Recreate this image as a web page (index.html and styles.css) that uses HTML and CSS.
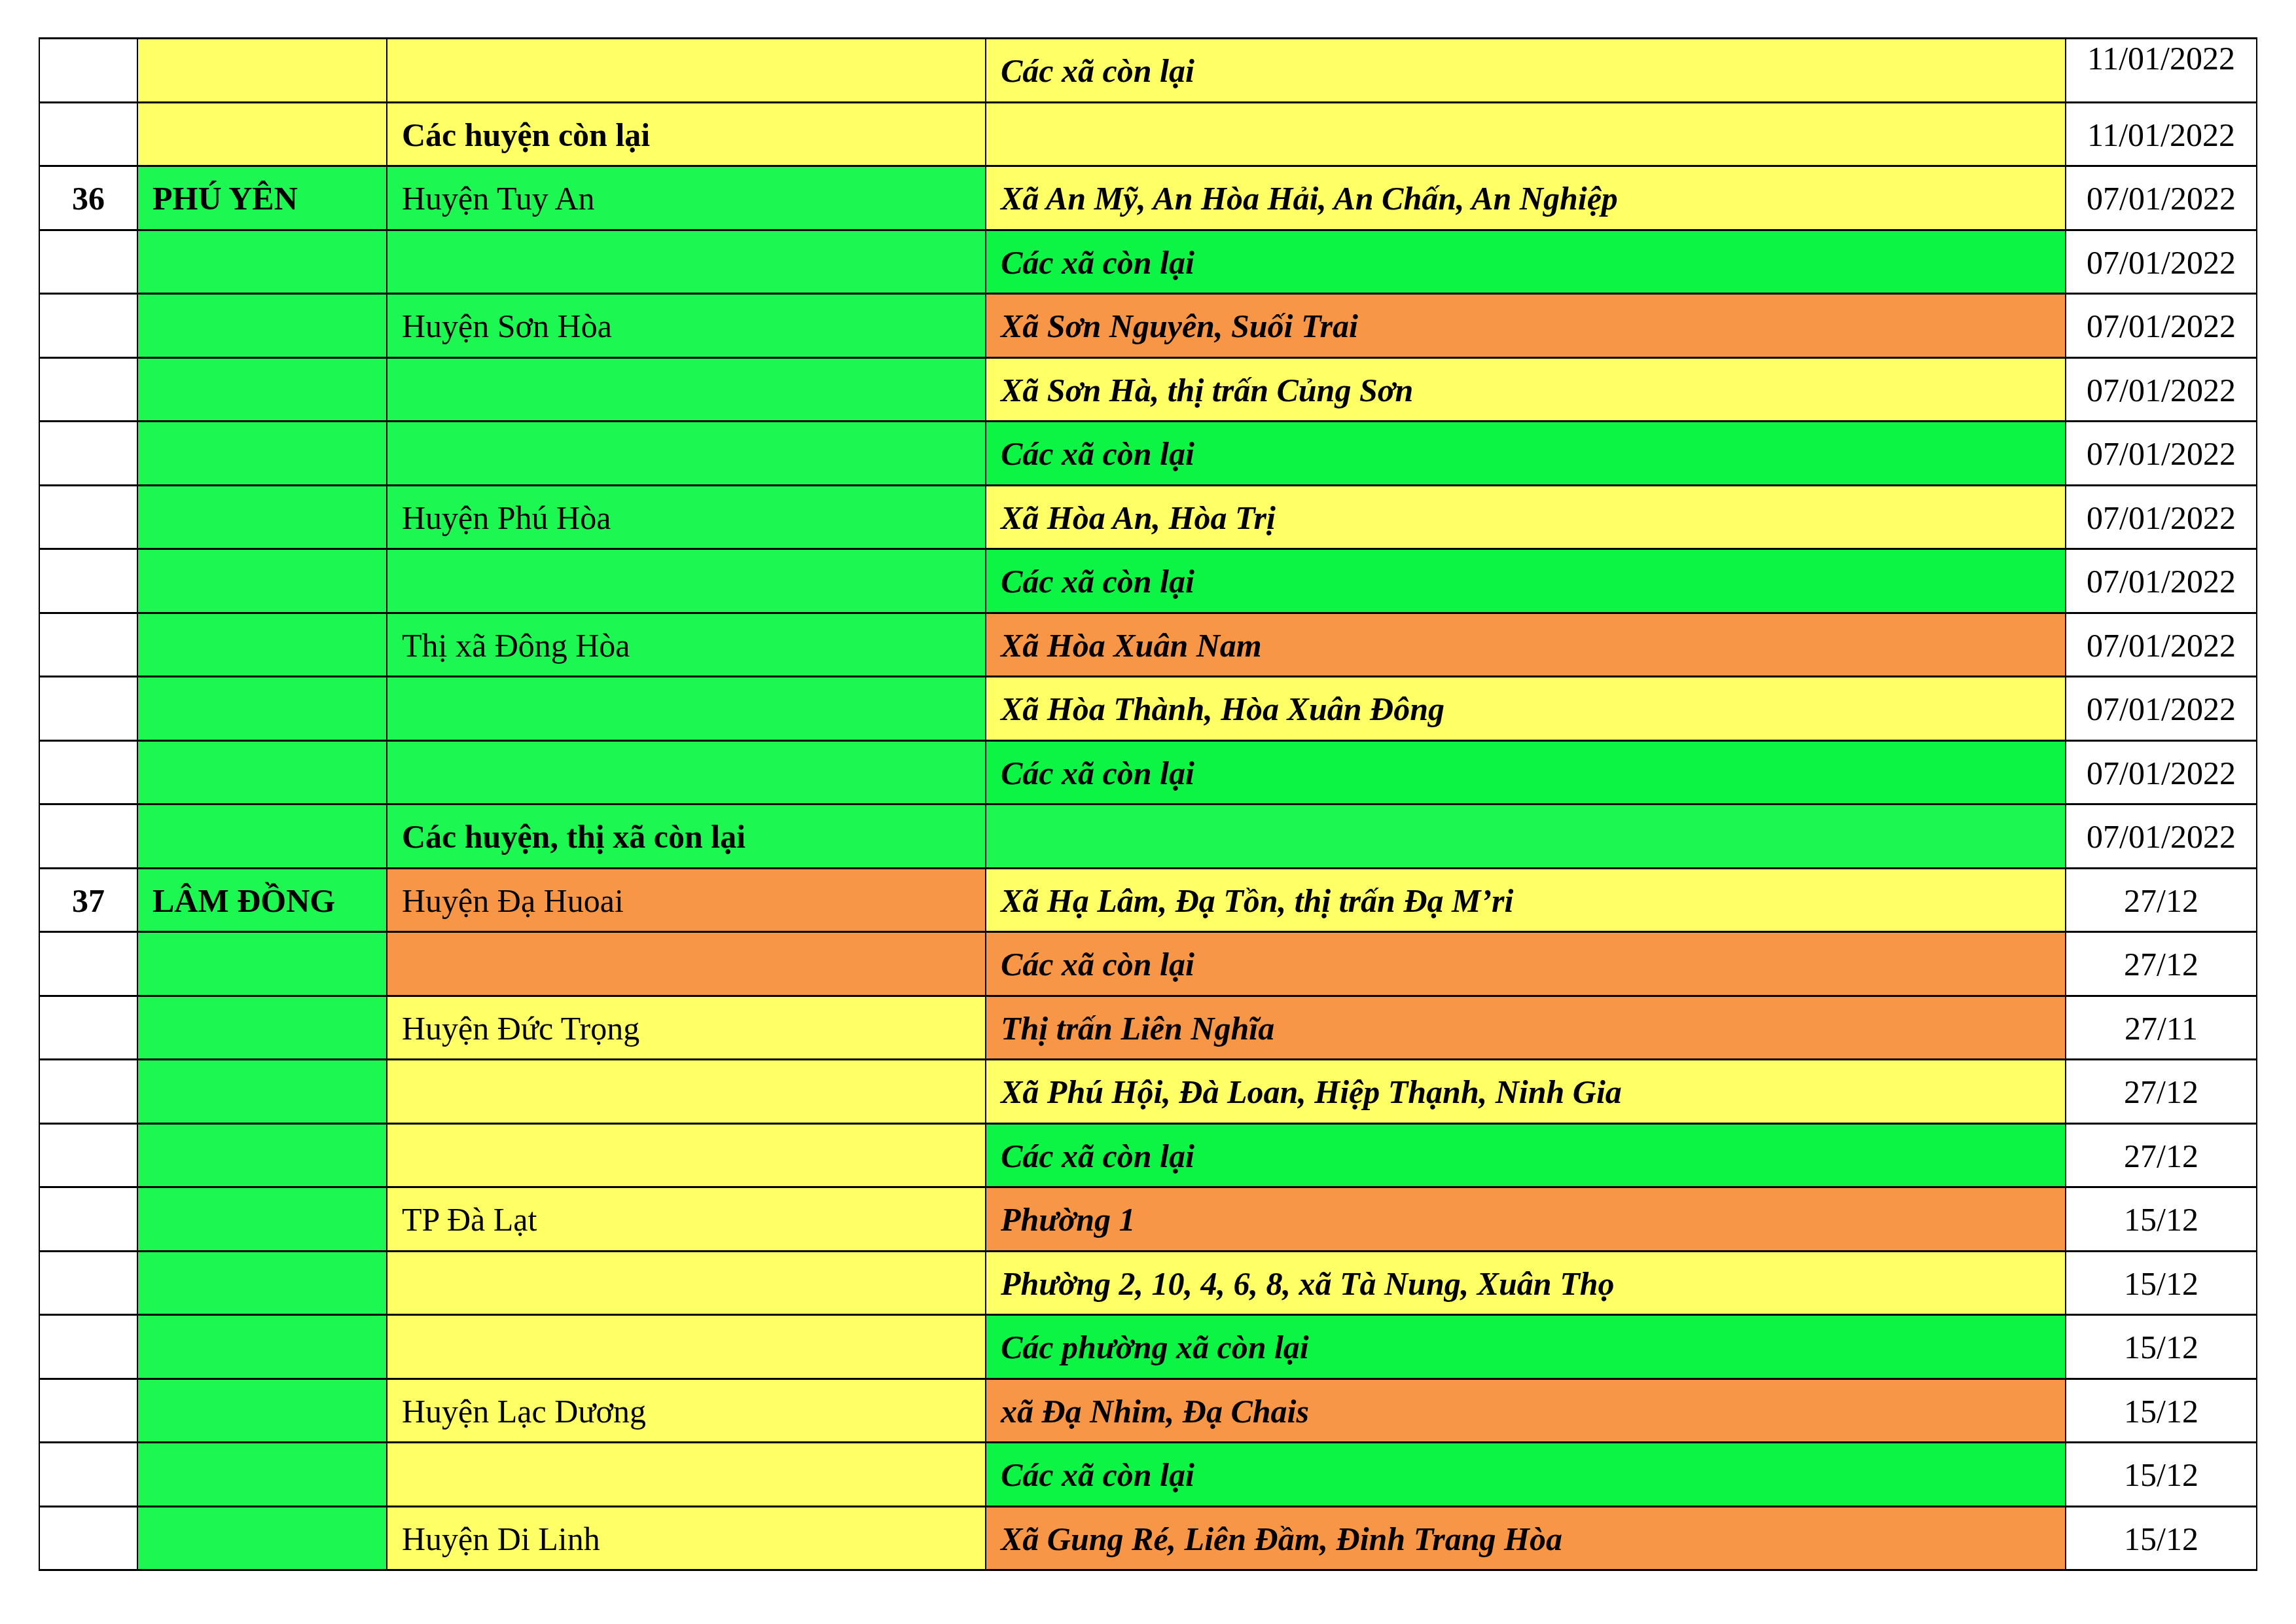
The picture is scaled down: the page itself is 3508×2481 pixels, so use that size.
FILE: index.html
```html
<!DOCTYPE html>
<html lang="vi">
<head>
<meta charset="utf-8">
<title>Bảng</title>
<link rel="stylesheet" href="styles.css">
</head>
<body>
<table class="grid">
<colgroup>
<col class="c-no"><col class="c-prov"><col class="c-dist"><col class="c-comm"><col class="c-date">
</colgroup>
<tbody>
<tr><td class="no"></td><td class="prov y"></td><td class="dist y"></td><td class="comm y">Các xã còn lại</td><td class="date top">11/01/2022</td></tr>
<tr><td class="no"></td><td class="prov y"></td><td class="dist y b">Các huyện còn lại</td><td class="comm y"></td><td class="date">11/01/2022</td></tr>
<tr><td class="no">36</td><td class="prov g">PHÚ YÊN</td><td class="dist g">Huyện Tuy An</td><td class="comm y">Xã An Mỹ, An Hòa Hải, An Chấn, An Nghiệp</td><td class="date">07/01/2022</td></tr>
<tr><td class="no"></td><td class="prov g"></td><td class="dist g"></td><td class="comm g2">Các xã còn lại</td><td class="date">07/01/2022</td></tr>
<tr><td class="no"></td><td class="prov g"></td><td class="dist g">Huyện Sơn Hòa</td><td class="comm o">Xã Sơn Nguyên, Suối Trai</td><td class="date">07/01/2022</td></tr>
<tr><td class="no"></td><td class="prov g"></td><td class="dist g"></td><td class="comm y">Xã Sơn Hà, thị trấn Củng Sơn</td><td class="date">07/01/2022</td></tr>
<tr><td class="no"></td><td class="prov g"></td><td class="dist g"></td><td class="comm g2">Các xã còn lại</td><td class="date">07/01/2022</td></tr>
<tr><td class="no"></td><td class="prov g"></td><td class="dist g">Huyện Phú Hòa</td><td class="comm y">Xã Hòa An, Hòa Trị</td><td class="date">07/01/2022</td></tr>
<tr><td class="no"></td><td class="prov g"></td><td class="dist g"></td><td class="comm g2">Các xã còn lại</td><td class="date">07/01/2022</td></tr>
<tr><td class="no"></td><td class="prov g"></td><td class="dist g">Thị xã Đông Hòa</td><td class="comm o">Xã Hòa Xuân Nam</td><td class="date">07/01/2022</td></tr>
<tr><td class="no"></td><td class="prov g"></td><td class="dist g"></td><td class="comm y">Xã Hòa Thành, Hòa Xuân Đông</td><td class="date">07/01/2022</td></tr>
<tr><td class="no"></td><td class="prov g"></td><td class="dist g"></td><td class="comm g2">Các xã còn lại</td><td class="date">07/01/2022</td></tr>
<tr><td class="no"></td><td class="prov g"></td><td class="dist g b">Các huyện, thị xã còn lại</td><td class="comm g"></td><td class="date">07/01/2022</td></tr>
<tr><td class="no">37</td><td class="prov g">LÂM ĐỒNG</td><td class="dist o">Huyện Đạ Huoai</td><td class="comm y">Xã Hạ Lâm, Đạ Tồn, thị trấn Đạ M’ri</td><td class="date">27/12</td></tr>
<tr><td class="no"></td><td class="prov g"></td><td class="dist o"></td><td class="comm o">Các xã còn lại</td><td class="date">27/12</td></tr>
<tr><td class="no"></td><td class="prov g"></td><td class="dist y">Huyện Đức Trọng</td><td class="comm o">Thị trấn Liên Nghĩa</td><td class="date">27/11</td></tr>
<tr><td class="no"></td><td class="prov g"></td><td class="dist y"></td><td class="comm y">Xã Phú Hội, Đà Loan, Hiệp Thạnh, Ninh Gia</td><td class="date">27/12</td></tr>
<tr><td class="no"></td><td class="prov g"></td><td class="dist y"></td><td class="comm g2">Các xã còn lại</td><td class="date">27/12</td></tr>
<tr><td class="no"></td><td class="prov g"></td><td class="dist y">TP Đà Lạt</td><td class="comm o">Phường 1</td><td class="date">15/12</td></tr>
<tr><td class="no"></td><td class="prov g"></td><td class="dist y"></td><td class="comm y">Phường 2, 10, 4, 6, 8, xã Tà Nung, Xuân Thọ</td><td class="date">15/12</td></tr>
<tr><td class="no"></td><td class="prov g"></td><td class="dist y"></td><td class="comm g2">Các phường xã còn lại</td><td class="date">15/12</td></tr>
<tr><td class="no"></td><td class="prov g"></td><td class="dist y">Huyện Lạc Dương</td><td class="comm o">xã Đạ Nhim, Đạ Chais</td><td class="date">15/12</td></tr>
<tr><td class="no"></td><td class="prov g"></td><td class="dist y"></td><td class="comm g2">Các xã còn lại</td><td class="date">15/12</td></tr>
<tr><td class="no"></td><td class="prov g"></td><td class="dist y">Huyện Di Linh</td><td class="comm o">Xã Gung Ré, Liên Đầm, Đinh Trang Hòa</td><td class="date">15/12</td></tr>
</tbody>
</table>
</body>
</html>
```

FILE: styles.css
```css
html, body {
  margin: 0;
  padding: 0;
  background: #ffffff;
}

body {
  font-family: "Liberation Serif", "Times New Roman", serif;
  font-size: 50px;
  color: #000000;
}

.grid {
  border-collapse: separate;
  border-spacing: 0;
  table-layout: fixed;
  width: 3390px;
  margin: 57px 0 0 59px;
  border-top: 3px solid #000;
  border-left: 2px solid #000;
}

.c-no { width: 150px; }
.c-prov { width: 381px; }
.c-dist { width: 915px; }
.c-comm { width: 1650px; }
.c-date { width: 292px; }

.grid td {
  height: 94.5px;
  box-sizing: border-box;
  padding: 23px 0 0 22px;
  line-height: 50px;
  vertical-align: top;
  white-space: nowrap;
  overflow: hidden;
  border-right: 2px solid #000;
  border-bottom: 3px solid #000;
  background: #ffffff;
}

.grid tr { height: 97.5px; }

.grid td.no {
  text-align: center;
  font-weight: bold;
  padding-left: 0;
}

.grid td.prov { font-weight: bold; }

.grid td.comm {
  font-weight: bold;
  font-style: italic;
}

.grid td.date {
  text-align: center;
  padding-left: 0;
}

.grid td.date.top { padding-top: 4px; }

.grid td.b { font-weight: bold; }

.grid td.y { background: #ffff66; }
.grid td.g { background: #1cf752; }
.grid td.g2 { background: #0cf545; }
.grid td.o { background: #f79646; }
```
